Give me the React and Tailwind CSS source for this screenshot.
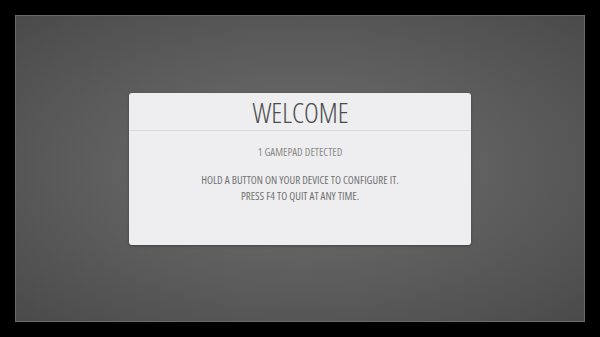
export default function App() {
  const font = { fontFamily: '"Open Sans", "DejaVu Sans", sans-serif', fontStretch: "75%" };
  return (
    <div className="w-[600px] h-[337px] bg-black p-[15px] flex">
      <div
        className="flex-1 flex items-center justify-center border border-[#6a6a6a]"
        style={{ background: "radial-gradient(ellipse at center, #6e6e6e 0%, #5e5e5e 50%, #4a4a4a 100%)" }}
      >
        <div className="w-[342px] h-[152px] bg-[#eeeef0] rounded-[3px] flex flex-col shadow-[0_1px_3px_rgba(0,0,0,0.3)]" style={font}>
          <div className="h-[38px] border-b border-[#dadada] flex items-center justify-center pl-[1px]">
            <span className="text-[28px] leading-none font-light text-[#4a4a4a] mt-[1px]">WELCOME</span>
          </div>
          <div className="flex flex-col items-center pt-[13px] text-[11px] leading-[15.5px] text-[#8a8a8a]">
            <div>1 GAMEPAD DETECTED</div>
            <div className="mt-[13px] text-[#727272]">HOLD A BUTTON ON YOUR DEVICE TO CONFIGURE IT.</div>
            <div className="text-[#727272]">PRESS F4 TO QUIT AT ANY TIME.</div>
          </div>
        </div>
      </div>
    </div>
  );
}
